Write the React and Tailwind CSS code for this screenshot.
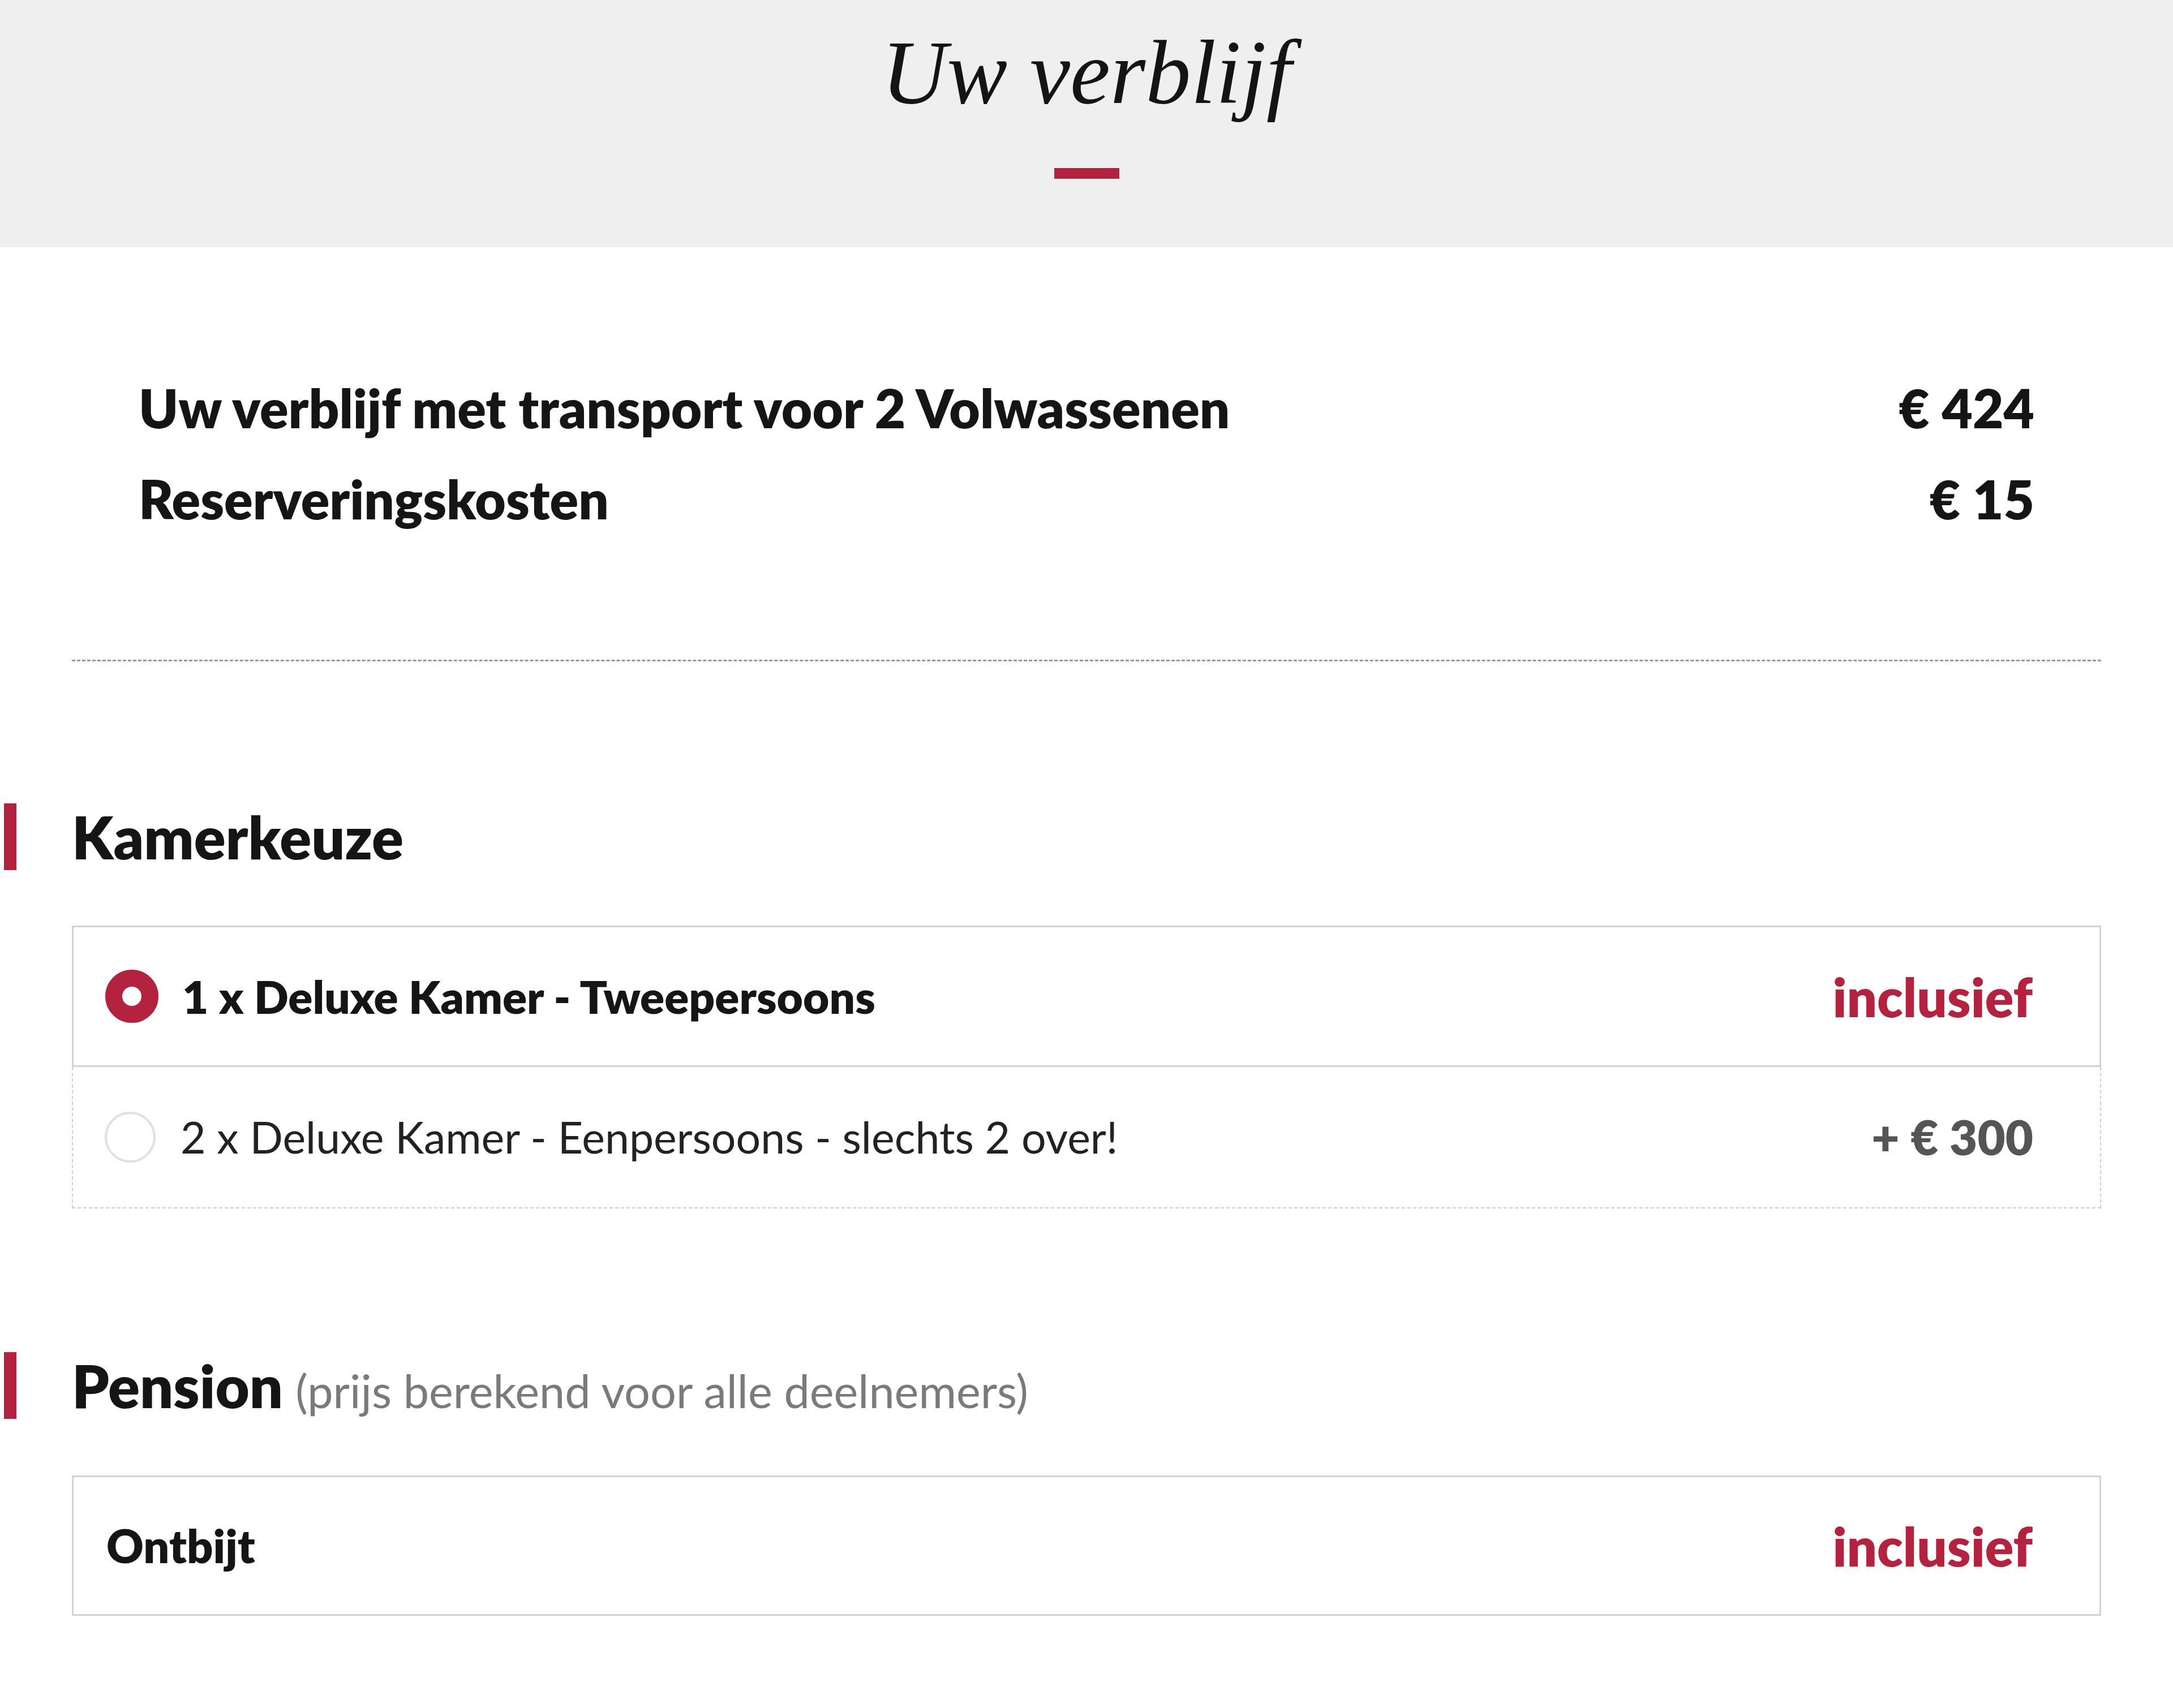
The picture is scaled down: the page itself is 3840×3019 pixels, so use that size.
import React from 'react';

const CRIMSON = 'text-[#b3233f]';

const SectionTitle = ({ title, note }) => (
  <div className="flex items-center h-[118px]">
    <div className="ml-[7px] w-[22px] h-[118px] bg-[#b3233f]" />
    <h2 className="ml-[98px] text-[104px] leading-none font-extrabold text-[#151515]">
      {title}
      {note && <span className="ml-[22px] text-[81px] font-normal text-[#7a7a7a]">{note}</span>}
    </h2>
  </div>
);

const Radio = ({ checked }) =>
  checked ? (
    <span className="w-[94px] h-[94px] shrink-0 rounded-full border-[30px] border-[#b3233f] bg-white" />
  ) : (
    <span className="w-[90px] h-[90px] shrink-0 rounded-full border-[4px] border-[#e0e0e0] bg-white" />
  );

const App = () => {
  const summary = [
    { label: 'Uw verblijf met transport voor 2 Volwassenen', price: '€ 424' },
    { label: 'Reserveringskosten', price: '€ 15' },
  ];

  return (
    <div className="w-[3840px] min-h-[3019px] bg-white font-['Lato',sans-serif] text-[#151515]">
      {/* Header */}
      <header className="h-[437px] bg-[#efefef] flex flex-col items-center">
        <h1 className="mt-[48px] font-['Liberation_Serif',serif] italic text-[160px] leading-none text-[#141414]">
          Uw verblijf
        </h1>
        <div className="mt-[89px] w-[115px] h-[19px] bg-[#b3233f]" />
      </header>

      {/* Price summary */}
      <section className="px-[245px] pt-[203px] pb-[204px]">
        {summary.map((row) => (
          <div key={row.label} className="flex justify-between text-[94px] leading-[161px] font-extrabold">
            <span>{row.label}</span>
            <span>{row.price}</span>
          </div>
        ))}
      </section>

      <div className="mx-[127px] border-t-[3px] border-dashed border-[#9a9a9a]" />

      {/* Kamerkeuze */}
      <div className="mt-[251px]">
        <SectionTitle title="Kamerkeuze" />
      </div>
      <div className="mx-[127px] mt-[98px]">
        <label className="h-[250px] flex items-center pl-[56px] pr-[118px] border-[3px] border-[#d2d2d2]">
          <Radio checked />
          <span className="ml-[42px] text-[80px] font-extrabold">1 x Deluxe Kamer - Tweepersoons</span>
          <span className={`ml-auto text-[94px] font-extrabold ${CRIMSON}`}>inclusief</span>
        </label>
        <label className="h-[250px] flex items-center pl-[56px] pr-[118px] border-x-[2px] border-b-[2px] border-dashed border-[#cdcdcd]">
          <Radio />
          <span className="ml-[44px] text-[77px] font-normal text-[#222]">
            2 x Deluxe Kamer - Eenpersoons - slechts 2 over!
          </span>
          <span className="ml-auto text-[85px] font-extrabold text-[#555]">+ € 300</span>
        </label>
      </div>

      {/* Pension */}
      <div className="mt-[254px]">
        <SectionTitle title="Pension" note="(prijs berekend voor alle deelnemers)" />
      </div>
      <div className="mx-[127px] mt-[100px] pb-[163px]">
        <div className="h-[248px] flex items-center pl-[58px] pr-[118px] border-[3px] border-[#d2d2d2]">
          <span className="text-[81px] font-extrabold">Ontbijt</span>
          <span className={`ml-auto text-[94px] font-extrabold ${CRIMSON}`}>inclusief</span>
        </div>
      </div>
    </div>
  );
};

export default App;
